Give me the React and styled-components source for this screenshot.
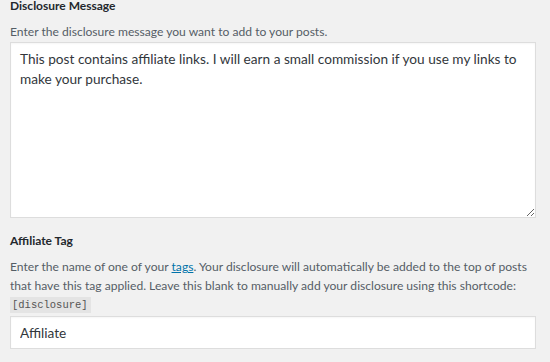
import React from "react";
import styled, { createGlobalStyle } from "styled-components";

const Global = createGlobalStyle`
  html, body { margin: 0; padding: 0; background: #f1f1f1; }
  body { font-family: "Lato", "Open Sans", sans-serif; }
`;

const Page = styled.div`
  width: 550px;
  height: 362px;
  box-sizing: border-box;
  padding: 0 14px 0 10px;
  overflow: hidden;
  display: flex;
  flex-direction: column;
`;

const Field = styled.section`
  display: flex;
  flex-direction: column;
  margin-top: ${(p) => p.$top || 0}px;
`;

const Label = styled.h3`
  margin: 0;
  font-size: 12px;
  font-weight: 700;
  color: #23282d;
  line-height: ${(p) => p.$lh || 16}px;
`;

const Desc = styled.div`
  margin-top: ${(p) => p.$mt || 8}px;
  font-size: 12.1px;
  line-height: 19px;
  color: #555d66;
`;

const Link = styled.a`
  color: #0073aa;
  text-decoration: underline;
`;

const Code = styled.code`
  display: block;
  width: fit-content;
  margin-top: 2px;
  font-family: "Liberation Mono", "DejaVu Sans Mono", monospace;
  font-size: 10.5px;
  line-height: 16px;
  padding: 0 3px 0 2px;
  background: #e4e4e4;
  color: #555;
`;

const TextArea = styled.textarea`
  display: block;
  box-sizing: border-box;
  width: 526px;
  height: 176px;
  margin: 1px 0 0;
  padding: 6px 9px;
  border: 1px solid #dddddd;
  background: #fff;
  color: #32373c;
  font-family: "Lato", "Open Sans", sans-serif;
  font-size: 13.65px;
  line-height: 20px;
  box-shadow: inset 0 1px 2px rgba(0, 0, 0, 0.04);
  resize: vertical;
  outline: none;
`;

const Input = styled.input`
  display: block;
  box-sizing: border-box;
  width: 526px;
  height: 33px;
  margin: 3px 0 0;
  padding: 0 9px;
  border: 1px solid #dddddd;
  background: #fff;
  color: #32373c;
  font-family: "Lato", "Open Sans", sans-serif;
  font-size: 13.65px;
  box-shadow: inset 0 1px 2px rgba(0, 0, 0, 0.04);
  outline: none;
`;

export default function App() {
  return (
    <>
      <Global />
      <Page>
        <Field>
          <Label $lh={12}>Disclosure Message</Label>
          <Desc $mt={10}>Enter the disclosure message you want to add to your posts.</Desc>
          <TextArea
            defaultValue="This post contains affiliate links. I will earn a small commission if you use my links to make your purchase."
          />
        </Field>
        <Field $top={15}>
          <Label>Affiliate Tag</Label>
          <Desc>
            Enter the name of one of your <Link href="#">tags</Link>. Your disclosure will automatically be added to the top of posts
            that have this tag applied. Leave this blank to manually add your disclosure using this shortcode:
            <Code>[disclosure]</Code>
          </Desc>
          <Input defaultValue="Affiliate" />
        </Field>
      </Page>
    </>
  );
}
